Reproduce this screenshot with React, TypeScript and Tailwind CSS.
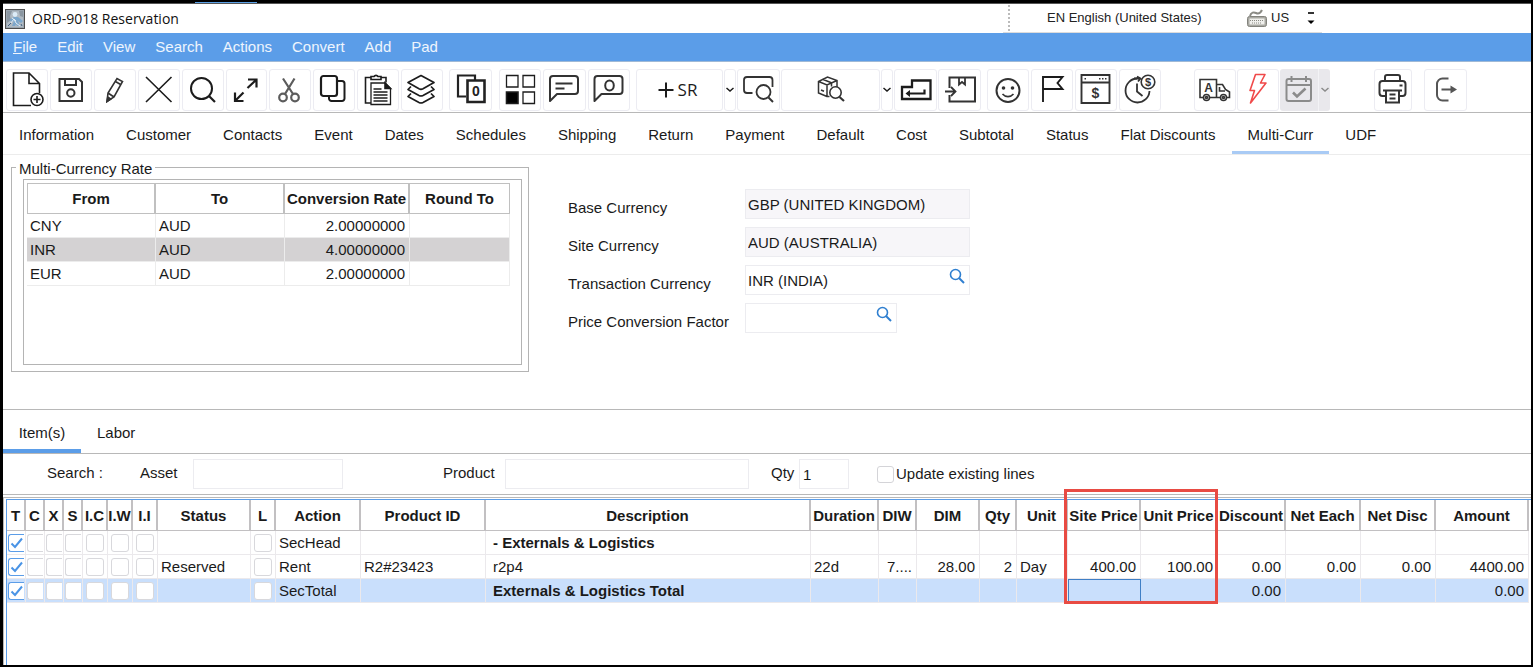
import type { ReactNode } from 'react'
import clsx from 'clsx'

const menus = ['File', 'Edit', 'View', 'Search', 'Actions', 'Convert', 'Add', 'Pad']

const tabs = [
  'Information', 'Customer', 'Contacts', 'Event', 'Dates', 'Schedules', 'Shipping', 'Return',
  'Payment', 'Default', 'Cost', 'Subtotal', 'Status', 'Flat Discounts', 'Multi-Curr', 'UDF',
]

const rates = [
  { from: 'CNY', to: 'AUD', rate: '2.00000000' },
  { from: 'INR', to: 'AUD', rate: '4.00000000', selected: true },
  { from: 'EUR', to: 'AUD', rate: '2.00000000' },
]

type Column = { key: string; label: string; width: string; kind?: 'check' | 'narrow' | 'number' }

const columns: Column[] = [
  { key: 't', label: 'T', width: 'w-[19px]', kind: 'narrow' },
  { key: 'c', label: 'C', width: 'w-[19px]', kind: 'narrow' },
  { key: 'x', label: 'X', width: 'w-[19px]', kind: 'narrow' },
  { key: 's', label: 'S', width: 'w-[19px]', kind: 'narrow' },
  { key: 'ic', label: 'I.C', width: 'w-[25px]', kind: 'check' },
  { key: 'iw', label: 'I.W', width: 'w-[25px]', kind: 'check' },
  { key: 'ii', label: 'I.I', width: 'w-[25px]', kind: 'check' },
  { key: 'status', label: 'Status', width: 'w-[93px]' },
  { key: 'l', label: 'L', width: 'w-[25px]', kind: 'check' },
  { key: 'action', label: 'Action', width: 'w-[85px]' },
  { key: 'product', label: 'Product ID', width: 'w-[125px]' },
  { key: 'description', label: 'Description', width: 'w-auto' },
  { key: 'duration', label: 'Duration', width: 'w-[68px]' },
  { key: 'diw', label: 'DIW', width: 'w-[38px]', kind: 'number' },
  { key: 'dim', label: 'DIM', width: 'w-[63px]', kind: 'number' },
  { key: 'qty', label: 'Qty', width: 'w-[37px]', kind: 'number' },
  { key: 'unit', label: 'Unit', width: 'w-[51px]' },
  { key: 'sitePrice', label: 'Site Price', width: 'w-[73px]', kind: 'number' },
  { key: 'unitPrice', label: 'Unit Price', width: 'w-[77px]', kind: 'number' },
  { key: 'discount', label: 'Discount', width: 'w-[68px]', kind: 'number' },
  { key: 'netEach', label: 'Net Each', width: 'w-[75px]', kind: 'number' },
  { key: 'netDisc', label: 'Net Disc', width: 'w-[75px]', kind: 'number' },
  { key: 'amount', label: 'Amount', width: 'w-[93px]', kind: 'number' },
]

type Item = { section?: boolean; selected?: boolean; values: Record<string, string> }

const items: Item[] = [
  { section: true, values: { action: 'SecHead', description: '- Externals & Logistics' } },
  {
    values: {
      status: 'Reserved', action: 'Rent', product: 'R2#23423', description: 'r2p4', duration: '22d',
      diw: '7....', dim: '28.00', qty: '2', unit: 'Day', sitePrice: '400.00', unitPrice: '100.00',
      discount: '0.00', netEach: '0.00', netDisc: '0.00', amount: '4400.00',
    },
  },
  {
    section: true,
    selected: true,
    values: { action: 'SecTotal', description: 'Externals & Logistics Total', discount: '0.00', amount: '0.00' },
  },
]

function Icon({ children, className }: { children: ReactNode; className?: string }) {
  return (
    <svg
      viewBox="0 0 40 40"
      className={clsx('size-10 shrink-0', className)}
      fill="none"
      stroke="currentColor"
      strokeWidth="1.6"
      aria-hidden="true"
    >
      {children}
    </svg>
  )
}

function ToolButton({ label, className, children }: { label: string; className?: string; children: ReactNode }) {
  return (
    <button
      type="button"
      aria-label={label}
      className={clsx(
        'flex h-[42px] items-center justify-center overflow-hidden rounded-[3px] border border-[#ececf2] text-[#1c1c1c]',
        className ?? 'min-w-0 flex-1',
      )}
    >
      {children}
    </button>
  )
}

function Chevron() {
  return (
    <svg viewBox="0 0 10 8" className="h-2 w-[10px] shrink-0" fill="none" stroke="currentColor" strokeWidth="1.5" aria-hidden="true">
      <path d="M1.5 2 5 5 8.5 2" />
    </svg>
  )
}

function Magnifier() {
  return (
    <svg viewBox="0 0 16 16" className="size-4" fill="none" stroke="#2f7fd0" strokeWidth="1.6" aria-hidden="true">
      <circle cx="6.5" cy="6.5" r="5" />
      <path d="M10 10l5 5" strokeWidth="2" />
    </svg>
  )
}

function TitleBar() {
  return (
    <header className="flex h-[30px] items-center justify-between border-t border-[#555] pr-[209px]">
      <div className="flex items-center gap-[7px] pl-[2px]">
        <svg viewBox="0 0 20 20" className="size-5" aria-hidden="true">
          <rect x="0.5" y="0.5" width="19" height="19" fill="#9aa5af" stroke="#4d4d4d" />
          <path d="M2 2h16v16H2z" fill="#b0bac3" />
          <path d="M2 2h5l-2 5 1 4-4 3zM14 2h4v6l-3-1z" fill="#8a96a1" />
          <circle cx="10" cy="5.5" r="2.4" fill="#dcecf8" />
          <path d="M9 8l-5 3 3 2 2-1-2 5h3l1-2 1 2h3l-2-5 3 2 2-2-5-4z" fill="#7ba6cb" />
          <path d="M5 15l4-5 2 4 4 3M7 9l4 3" stroke="#e4eef6" fill="none" />
          <path d="M3 17l3-3M16 15l1 2" stroke="#3f5f80" fill="none" />
        </svg>
        <h1 className="font-['Open_Sans',sans-serif] text-[14px] leading-5 text-[#111]">ORD-9018 Reservation</h1>
      </div>
      <div className="flex h-full w-[319px] items-center border-b border-[#dcdcdc] pl-[5px] text-[#222]">
        <span className="h-[26px] border-l-2 border-dotted border-[#bbb]" />
        <span className="w-[200px] pl-[37px] text-[13px] whitespace-nowrap">EN English (United States)</span>
        <span className="flex flex-1 items-center gap-1 pl-[37px] text-[13px]">
          <svg viewBox="0 0 20 18" className="h-[18px] w-5" fill="none" aria-hidden="true">
            <path d="M3 7c1-4 4-4 6-3s4 1 6-3" stroke="#8a8a84" strokeWidth="2" />
            <rect x="0.5" y="7.5" width="19" height="10" rx="2" fill="#a8a8a2" stroke="#83837d" />
            <rect x="2.5" y="9.5" width="15" height="6" fill="#efefec" />
            <path d="M3 11.5h14M5 14h10" stroke="#8a8a84" strokeDasharray="1 1" />
          </svg>
          US
        </span>
        <svg viewBox="0 0 8 14" className="mr-[7px] h-[14px] w-2" aria-hidden="true">
          <path d="M1 1h6v2H1z" fill="#333" />
          <path d="M0.5 9.5h7L4 13z" fill="#000" />
        </svg>
      </div>
    </header>
  )
}

function Toolbar() {
  return (
    <div role="toolbar" aria-label="Main toolbar" className="flex border-b border-[#b8b8b8] pt-[7px] pb-px pl-[3px]">
      <div className="flex w-[437px] gap-[2px]">
        <ToolButton label="New">
          <Icon>
            <path d="M24 35.5H6.5V3H22l10.500 10.500V23M22 3v10.500h10.500" />
            <circle cx="30" cy="29.5" r="6" />
            <path d="M30 26v7M26.500 29.5h7" />
          </Icon>
        </ToolButton>
        <ToolButton label="Save">
          <Icon className="text-[#333]">
            <path d="M8.500 9H28l3 3v19H8.500z" strokeWidth="2" />
            <path d="M14 9v6h11V9" strokeWidth="2" />
            <circle cx="19.800" cy="23" r="3.700" strokeWidth="2" />
          </Icon>
        </ToolButton>
        <ToolButton label="Edit">
          <Icon className="text-[#333]">
            <path d="M12 31.5l1-8.500L22 8.500l5.500 3L19 27zM13 23l6 4M20.500 11.500l5.500 3.200" />
            <path d="M12 31.5l.8-4.500 3 2z" fill="currentColor" />
          </Icon>
        </ToolButton>
        <ToolButton label="Delete">
          <Icon>
            <path d="M7 7l25.5 25M32.5 7L7 32" />
          </Icon>
        </ToolButton>
        <ToolButton label="Find">
          <Icon>
            <circle cx="18.5" cy="18.5" r="10.500" strokeWidth="2" />
            <path d="M26 26l6 6" strokeWidth="2.2" />
          </Icon>
        </ToolButton>
        <ToolButton label="Expand">
          <Icon>
            <path d="M22 9.500h8.500v8M30 10l-8.500 8M9 22.500v8.500h8.500M9.500 30.500l8-8" strokeWidth="2.2" />
          </Icon>
        </ToolButton>
        <ToolButton label="Cut">
          <Icon className="text-[#5c5c5c]">
            <path d="M13 8.500L23 24M24.500 8.500L15 24" strokeWidth="2.2" />
            <circle cx="13" cy="27.500" r="3.800" strokeWidth="2.2" />
            <circle cx="25" cy="27.500" r="3.800" strokeWidth="2.2" />
          </Icon>
        </ToolButton>
        <ToolButton label="Copy">
          <Icon>
            <rect x="7" y="6" width="16" height="20" rx="2.5" strokeWidth="2.2" />
            <path d="M23 11h5a2.500 2.500 0 012.500 2.500v15A2.500 2.500 0 0128 31H17.500a2.500 2.500 0 01-2.500-2.500V26" strokeWidth="2" />
          </Icon>
        </ToolButton>
        <ToolButton label="Paste">
          <Icon>
            <path d="M13 7.500H7.500V33H13M23 7.500h5v5M13 9.500V6.500h3a2.300 2.300 0 014 0h3v3z" />
            <path d="M13 13h14l5.500 5.500V34.500H13z" strokeWidth="1.300" />
            <path d="M27 13v5.500h5.500z" fill="currentColor" />
            <path d="M15.500 19h8M15.500 22h14M15.500 25h14M15.500 28h14M15.500 31h14" strokeWidth="1.300" />
          </Icon>
        </ToolButton>
        <ToolButton label="Layers">
          <Icon>
            <path d="M19 5.500l13 7-11 6.300q-2 1-4 0L6 12.500zM9 16.500l-3 3 11 6q2 1 4 0l11-6-3-3M9 23.500l-3 3 11 6q2 1 4 0l11-6-3-3" strokeWidth="1.700" strokeLinejoin="round" />
          </Icon>
        </ToolButton>
      </div>

      <div className="ml-[6px] flex w-[43px]">
        <ToolButton label="Copy without quantity">
          <Icon className="text-[#222]">
            <path d="M15 26.5H7v-21H24V10" strokeWidth="2.200" />
            <path d="M16.500 10.500h17V32h-17z" strokeWidth="2.600" />
            <text x="25" y="26" textAnchor="middle" fontSize="14" fontWeight="700" fill="currentColor" stroke="none">0</text>
          </Icon>
        </ToolButton>
      </div>

      <div className="ml-[7px] flex w-[131px] gap-[2px]">
        <ToolButton label="Grid">
          <Icon>
            <path d="M6.500 5.500h11.500v11.500H6.500zM23 5.500h11.500v11.500H23zM23 22h11.500v11.500H23z" strokeWidth="1.300" />
            <path d="M6.500 22h11.500v11.500H6.500z" fill="#000" />
          </Icon>
        </ToolButton>
        <ToolButton label="Notes">
          <Icon className="text-[#333]">
            <path d="M6 31V9a3 3 0 013-3h22a3 3 0 013 3v12a3 3 0 01-3 3H13z" strokeWidth="2" strokeLinejoin="round" />
            <path d="M11.5 13.500h17M11.5 18.500h9" strokeWidth="1.800" />
          </Icon>
        </ToolButton>
        <ToolButton label="Open notes">
          <Icon className="text-[#333]">
            <path d="M5.500 31V9a3 3 0 013-3h22a3 3 0 013 3v12a3 3 0 01-3 3H12.500z" strokeWidth="2" strokeLinejoin="round" />
            <ellipse cx="20.500" cy="15.500" rx="4.300" ry="5" strokeWidth="2" />
          </Icon>
        </ToolButton>
      </div>

      <div className="ml-[6px] flex gap-px">
        <ToolButton label="Add SR" className="w-[87px] gap-1">
          <svg viewBox="0 0 16 16" className="size-4" stroke="currentColor" strokeWidth="2" aria-hidden="true">
            <path d="M8 0.500v15M0.500 8h15" />
          </svg>
          <span className="pr-1 font-['Open_Sans',sans-serif] text-[17px] leading-[22px] font-medium">SR</span>
        </ToolButton>
        <ToolButton label="SR options" className="w-3"><Chevron /></ToolButton>
        <ToolButton label="Search notes" className="w-[43px]">
          <Icon className="text-[#333]">
            <path d="M13.500 23H8a3 3 0 01-3-3V10a3 3 0 013-3h22.500a3 3 0 013 3v7" strokeWidth="1.800" />
            <circle cx="24.5" cy="22" r="7" strokeWidth="1.800" />
            <path d="M29.500 27.500l4.500 4.500" strokeWidth="2" />
          </Icon>
        </ToolButton>
        <ToolButton label="Find product" className="w-[99px]">
          <Icon className="text-[#333]">
            <path d="M16 26.500L7.500 23V11.500L16.500 7l9.500 3.500V17M7.500 11.500L16 15l10-4.500M16 15v11.500h2.500M11.500 9.300l9 3.500v3.700M10 20l3 1.300" strokeWidth="1.500" />
            <circle cx="24.500" cy="22.500" r="5.700" />
            <path d="M28.500 27l4.500 4" strokeWidth="2.2" />
          </Icon>
        </ToolButton>
        <ToolButton label="Product options" className="w-3"><Chevron /></ToolButton>
        <ToolButton label="Return item" className="w-[43px]">
          <Icon>
            <path d="M6 17h10v-6.500h18.500v18.500H6z" strokeWidth="2.300" />
            <path d="M28.500 19.500v4H11" strokeWidth="2.200" />
            <path d="M9.500 23.500l4.500-3.500v7z" fill="currentColor" stroke="none" />
          </Icon>
        </ToolButton>
        <ToolButton label="Receive" className="w-[43px]">
          <Icon className="text-[#333]">
            <path d="M9.500 18V7.500h25.500v24H9.500V25" strokeWidth="2" />
            <path d="M19 7.500v7l3-2.500 3 2.500v-7" strokeWidth="1.800" />
            <path d="M5 21.5h10M11 17l4.500 4.500L11 26" strokeWidth="1.800" />
          </Icon>
        </ToolButton>
      </div>

      <div className="ml-[6px] flex w-[174px] gap-[2px]">
        <ToolButton label="Satisfaction">
          <Icon className="text-[#333]">
            <circle cx="20" cy="20.500" r="11.500" strokeWidth="2" />
            <circle cx="15.500" cy="18" r="1.800" fill="currentColor" stroke="none" />
            <circle cx="24.500" cy="18" r="1.800" fill="currentColor" stroke="none" />
            <path d="M14.500 24c3 3.500 8 3.500 11 0" />
          </Icon>
        </ToolButton>
        <ToolButton label="Flag">
          <Icon>
            <path d="M11 32V7h19.500l-5 6 5 6H11" strokeWidth="1.900" />
          </Icon>
        </ToolButton>
        <ToolButton label="Pricing">
          <Icon className="text-[#333]">
            <path d="M5.500 5h28v28h-28zM5.500 12.500h28" strokeWidth="1.900" />
            <path d="M8.500 8.800h3M23 8.800h8" strokeDasharray="1.500 1.500" />
            <text x="19.500" y="27.500" textAnchor="middle" fontSize="14" fontWeight="700" fill="currentColor" stroke="none">$</text>
          </Icon>
        </ToolButton>
        <ToolButton label="Billing time">
          <Icon className="text-[#333]">
            <path d="M17 8.500A12 12 0 1029.500 21" strokeWidth="1.800" />
            <path d="M14 8.500h6M17 6.500l3.500 2-2.500 3M17 13.500v8l5.500 4.500" strokeWidth="1.800" />
            <circle cx="28" cy="12" r="6.800" />
            <text x="28" y="16" textAnchor="middle" fontSize="11" fontWeight="700" fill="currentColor" stroke="none">$</text>
          </Icon>
        </ToolButton>
      </div>

      <div className="ml-[33px] flex gap-px">
        <ToolButton label="Auto delivery" className="w-[42px]">
          <Icon className="text-[#333]">
            <path d="M8.500 27.500H5v-18h16.500v18h-7M21.500 14.500h6l3 5 4 2.500v5.500h-2.500M21.500 27.500h3.500M24.500 17v4h5.500" />
            <circle cx="11.500" cy="27.500" r="3" />
            <circle cx="28.500" cy="27.500" r="3" />
            <circle cx="11.500" cy="27.500" r="1" />
            <circle cx="28.500" cy="27.500" r="1" />
            <text x="13.500" y="21.500" textAnchor="middle" fontSize="12" fontWeight="700" fill="currentColor" stroke="none">A</text>
          </Icon>
        </ToolButton>
        <ToolButton label="Quick action" className="w-[42px]">
          <Icon className="text-[#f04a4a]">
            <path d="M17.500 4.500H27L22.500 13H28L12.500 33l4-12.500H12z" strokeLinejoin="round" />
          </Icon>
        </ToolButton>
        <div className="flex rounded-[3px] bg-[#e9e8ec]">
          <button type="button" disabled aria-label="Schedule" className="flex w-[38px] items-center justify-center text-[#8b8b8b]">
            <Icon>
              <rect x="7.500" y="9" width="24.500" height="22" rx="2" strokeWidth="2" />
              <path d="M7.500 15h24.500M12.500 6v6M27 6v6" strokeWidth="2" />
              <path d="M14 22.500l4 4 8.500-8" strokeWidth="2.600" />
            </Icon>
          </button>
          <button type="button" disabled aria-label="Schedule options" className="flex w-3 items-center justify-center border-l border-[#f3f3f6] text-[#8b8b8b]">
            <Chevron />
          </button>
        </div>
      </div>

      <div className="ml-[44px] flex gap-3">
        <ToolButton label="Print" className="w-[38px]">
          <Icon className="text-[#333]">
            <path d="M12 11V7a2 2 0 012-2h11a2 2 0 012 2v4M12 26H9.500a3 3 0 01-3-3V14a3 3 0 013-3h20a3 3 0 013 3v9a3 3 0 01-3 3H27" strokeWidth="2" />
            <path d="M10 20.500h19M13 20.500V32.500h13V20.500M16.500 24.500h6M16.500 28.500h6M26.500 15.500h3" strokeWidth="2" />
          </Icon>
        </ToolButton>
        <ToolButton label="Exit" className="w-[43px]">
          <Icon className="text-[#555]">
            <path d="M22.500 8.500h-6a5.500 5.500 0 00-5.500 5.500v11a5.500 5.500 0 005.500 5.500h6" strokeWidth="2" />
            <path d="M15.500 19.500h10" strokeWidth="2" />
            <path d="M24.500 15.500l6.500 4-6.500 4z" fill="currentColor" stroke="none" />
          </Icon>
        </ToolButton>
      </div>
    </div>
  )
}

function CurrencyRates() {
  return (
    <fieldset className="mt-px ml-2 w-[518px] border border-[#b4b4b4] pt-px pr-[6px] pb-[6px] pl-[11px]">
      <legend className="-ml-[7px] px-[3px] pt-1 leading-[18px]">Multi-Currency Rate</legend>
      <div className="h-[186px] border border-[#b4b4b4] p-[3px]">
        <table className="w-[483px] table-fixed border-separate border-spacing-0">
          <thead>
            <tr className="h-[31px]">
              <th className="w-[129px] border-t border-r-2 border-b border-l border-[#c0c0c0]">From</th>
              <th className="w-[129px] border-t border-r-2 border-b border-[#c0c0c0]">To</th>
              <th className="w-[125px] border-t border-r-2 border-b border-[#c0c0c0] whitespace-nowrap">Conversion Rate</th>
              <th className="border-t border-r border-b border-[#c0c0c0]">Round To</th>
            </tr>
          </thead>
          <tbody>
            {rates.map((row) => (
              <tr
                key={row.from}
                className={clsx('h-6 [&>td]:border-r [&>td]:border-b [&>td]:border-[#ececec]', row.selected && 'bg-[#d4d2d3]')}
              >
                <td className="pl-[3px]">{row.from}</td>
                <td className="pl-[3px]">{row.to}</td>
                <td className="pr-1 text-right">{row.rate}</td>
                <td />
              </tr>
            ))}
          </tbody>
        </table>
      </div>
    </fieldset>
  )
}

function CurrencyField({ id, label, value, readOnly, short }: { id: string; label: string; value: string; readOnly?: boolean; short?: boolean }) {
  return (
    <div className="flex items-end">
      <label htmlFor={id} className="w-[177px] leading-[23px]">{label}</label>
      <div
        className={clsx(
          'flex h-[30px] items-start border border-[#ececf0]',
          short ? 'w-[152px]' : 'w-[225px]',
          readOnly ? 'bg-[#f7f6f9]' : 'bg-white',
        )}
      >
        <input id={id} defaultValue={value} readOnly={readOnly} className="h-7 min-w-0 flex-1 bg-transparent pl-[2px] outline-none" />
        {!readOnly && (
          <button type="button" aria-label={`Look up ${label}`} className="mt-[2px] mr-[4px]">
            <Magnifier />
          </button>
        )}
      </div>
    </div>
  )
}

function RowCheck({ label, narrow, checked }: { label: string; narrow?: boolean; checked?: boolean }) {
  return (
    <span className="relative flex justify-center">
      <input
        type="checkbox"
        defaultChecked={checked}
        aria-label={label}
        className={clsx(
          'h-[18px] appearance-none border bg-white',
          narrow ? 'w-4 rounded-l-[3px] border-r-0' : 'w-[18px] rounded-[3px]',
          checked ? 'border-[#5b9de8]' : 'border-[#d8d8dc]',
        )}
      />
      {checked && (
        <svg viewBox="0 0 18 18" className="pointer-events-none absolute inset-0 size-[18px]" fill="none" stroke="#4a94e6" strokeWidth="2" aria-hidden="true">
          <path d="M4.500 9.500L8 13l7-8.500" />
        </svg>
      )}
    </span>
  )
}

function ItemCell({ column, item }: { column: Column; item: Item }) {
  const isCheck = column.kind === 'check' || column.kind === 'narrow'
  const focused = item.selected && column.key === 'sitePrice'

  return (
    <td
      className={clsx(
        'overflow-hidden border-r border-b border-[#ebe9ec] whitespace-nowrap',
        column.kind === 'number' && 'pr-1 text-right',
        !isCheck && column.kind !== 'number' && (column.key === 'description' ? 'pl-[7px]' : 'pl-[3px]'),
        item.section && column.key === 'description' && 'font-bold',
        item.selected && 'bg-[#c9dffc]',
        focused && 'outline outline-1 -outline-offset-1 outline-[#3f7fc6]',
      )}
    >
      {isCheck ? (
        <RowCheck label={column.label} narrow={column.kind === 'narrow'} checked={column.key === 't'} />
      ) : (
        item.values[column.key]
      )}
    </td>
  )
}

function ItemsTable() {
  return (
    <table className="w-full table-fixed border-separate border-spacing-0">
      <thead>
        <tr className="h-[31px]">
          {columns.map((column) => (
            <th
              key={column.key}
              className={clsx('border-r-2 border-b border-[#c2c0c2] p-0 whitespace-nowrap', column.width, column.key === 'sitePrice' && 'relative')}
            >
              <span className="flex justify-center pt-[2px]">{column.label}</span>
              {/* Marks the two price columns */}
              {column.key === 'sitePrice' && (
                <span className="pointer-events-none absolute -top-[11px] -left-[4px] z-10 h-[115px] w-[154px] border-3 border-[#e84b43]" />
              )}
            </th>
          ))}
        </tr>
      </thead>
      <tbody>
        {items.map((item) => (
          <tr key={item.values.action} className="h-6">
            {columns.map((column) => (
              <ItemCell key={column.key} column={column} item={item} />
            ))}
          </tr>
        ))}
      </tbody>
    </table>
  )
}

export default function App() {
  return (
    <div className="flex min-h-screen flex-col border-r-2 border-b-2 border-l-3 border-black bg-white font-['Liberation_Sans',Arial,sans-serif] text-[15px] leading-5 text-[#1a1a1a]">
      <div className="flex h-[3px] items-end bg-black pl-[192px]">
        <div className="h-px w-[62px] bg-[#5aa0e6]" />
      </div>
      <TitleBar />

      <nav className="flex h-[29px] items-center border-b border-[#9fb9d6] bg-[#5b9de8] text-white/90">
        {menus.map((menu) => (
          <button key={menu} type="button" className="px-[10px]">
            {menu === 'File' ? <><u>F</u>ile</> : menu}
          </button>
        ))}
      </nav>

      <Toolbar />

      <div role="tablist" aria-label="Order sections" className="flex h-[42px] border-b border-[#ececec]">
        {tabs.map((tab) => (
          <button
            key={tab}
            type="button"
            role="tab"
            aria-selected={tab === 'Multi-Curr'}
            className={clsx(
              'border-b-3 px-4 pt-[6px] whitespace-nowrap',
              tab === 'Multi-Curr' ? 'border-[#a9cbf5]' : 'border-transparent',
            )}
          >
            {tab}
          </button>
        ))}
      </div>

      <section className="flex h-[255px] items-start border-b border-[#b8b8b8]">
        <CurrencyRates />
        <div className="mt-[34px] ml-[39px] flex flex-col gap-2">
          <CurrencyField id="base" label="Base Currency" value="GBP (UNITED KINGDOM)" readOnly />
          <CurrencyField id="site" label="Site Currency" value="AUD (AUSTRALIA)" readOnly />
          <CurrencyField id="transaction" label="Transaction Currency" value="INR (INDIA)" />
          <CurrencyField id="factor" label="Price Conversion Factor" value="" short />
        </div>
      </section>

      <div role="tablist" aria-label="Order lines" className="flex h-11 border-b border-[#b8b8b8]">
        <button type="button" role="tab" aria-selected="true" className="w-[78px] border-b-4 border-[#5b9de8] pt-[6px]">Item(s)</button>
        <button type="button" role="tab" aria-selected="false" className="border-b-4 border-transparent px-4 pt-[6px]">Labor</button>
      </div>

      <form className="flex h-[41px] items-center border-b border-[#b8b8b8] pl-11">
        <span className="w-[93px] pb-[2px]">Search :</span>
        <label htmlFor="asset" className="w-[53px] pb-[2px]">Asset</label>
        <input id="asset" className="h-[30px] w-[150px] border border-[#ececf0] px-[3px] outline-none" />
        <label htmlFor="product" className="ml-[100px] w-[62px] pb-[2px]">Product</label>
        <input id="product" className="h-[30px] w-[244px] border border-[#ececf0] px-[3px] outline-none" />
        <label htmlFor="qty" className="ml-[22px] w-7 pb-[2px]">Qty</label>
        <input id="qty" defaultValue="1" className="h-[30px] w-[50px] border border-[#ececf0] px-[3px] outline-none" />
        <label className="ml-7 flex items-center gap-[2px]">
          <input type="checkbox" className="size-[17px] appearance-none rounded-[3px] border border-[#d4d4d8] bg-white" />
          Update existing lines
        </label>
      </form>

      <div className="mt-[2px] flex flex-1 border-t border-l border-[#b8b8b8] pt-px pl-[2px]">
        <div className="flex-1 border-t border-l border-[#5b9de8] pr-[2px]">
          <ItemsTable />
        </div>
      </div>
    </div>
  )
}
